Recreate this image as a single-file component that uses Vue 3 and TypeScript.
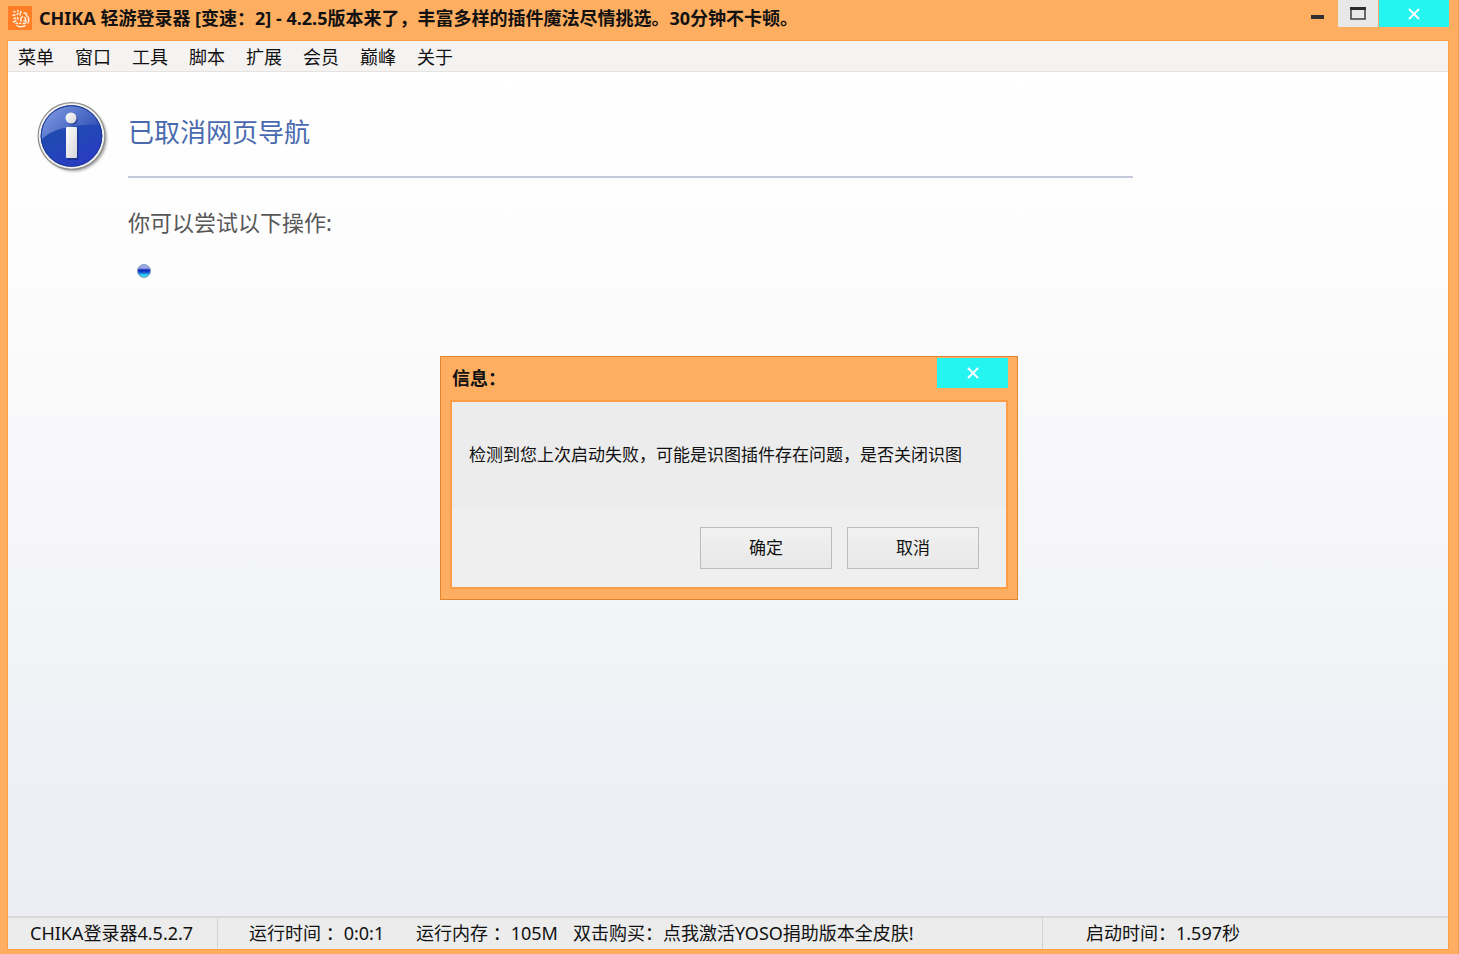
<script setup lang="ts">
const menuItems: string[] = ['菜单', '窗口', '工具', '脚本', '扩展', '会员', '巅峰', '关于']
const title = 'CHIKA 轻游登录器 [变速：2] - 4.2.5版本来了，丰富多样的插件魔法尽情挑选。30分钟不卡顿。'
</script>

<template>
  <div class="window">
    <header class="titlebar">
      <svg class="logo" viewBox="0 0 24 24" aria-hidden="true">
        <rect width="24" height="24" fill="#ff7d24" />
        <g fill="none" stroke="#ffeedd" stroke-width="1.500" stroke-linecap="round">
          <path d="M6 5.500l1 .5M10 4.500v1M5 9.500l2-.5M9 8.500l1-1M6 12.500l1.500-.5M9.500 11.500l.5 1.500M5.500 16l2.500-1.500M8 17.500l1.500-.5" />
          <path d="M13 5.500l-1 3.500M16 7c2 0 3 1 2.500 3M20 10.500c1 2 1 4.500 0 6.500M14.500 10.500c-1.500 1-2 3-1.500 4.500M16.500 11.500c1.500.5 1.500 3-.5 3.500M18 14.500c.5 2-1 3.500-3 3" />
          <path d="M9 19.500c2 1.500 5.500 1.500 8 .3M11.500 17.500h1" />
        </g>
      </svg>
      <h1 class="title">{{ title }}</h1>
      <div class="controls">
        <button class="ctl min" type="button" aria-label="最小化">
          <svg width="13" height="4" viewBox="0 0 13 4"><rect width="13" height="4" fill="#303030" /></svg>
        </button>
        <button class="ctl max" type="button" aria-label="最大化">
          <svg width="16" height="13" viewBox="0 0 16 13">
            <path d="M1 1v11h14V1" fill="none" stroke="#3c3c3c" stroke-width="1.500" />
            <rect width="16" height="3" fill="#2b2b2b" />
          </svg>
        </button>
        <button class="ctl close" type="button" aria-label="关闭">
          <svg width="12" height="12" viewBox="0 0 12 12"><path d="M1 1l10 10M11 1L1 11" stroke="#fff" stroke-width="2" /></svg>
        </button>
      </div>
    </header>

    <div class="client">
      <nav class="menubar">
        <button v-for="item in menuItems" :key="item" class="menu-item" type="button">{{ item }}</button>
      </nav>

      <main class="page">
        <svg class="info" viewBox="0 0 74 76" aria-hidden="true">
          <defs>
            <linearGradient id="disc" x1="0.1" y1="0" x2="0.6" y2="1">
              <stop offset="0" stop-color="#1f4fa8" />
              <stop offset="0.55" stop-color="#2148b4" />
              <stop offset="1" stop-color="#2a3cc4" />
            </linearGradient>
            <linearGradient id="gloss" x1="0" y1="0" x2="1" y2="0.6">
              <stop offset="0" stop-color="#86a0e4" />
              <stop offset="1" stop-color="#3050b6" />
            </linearGradient>
            <linearGradient id="stem" x1="0" y1="0" x2="1" y2="1">
              <stop offset="0" stop-color="#ffffff" />
              <stop offset="1" stop-color="#d4d4d8" />
            </linearGradient>
            <filter id="soft" x="-20%" y="-20%" width="140%" height="140%"><feGaussianBlur stdDeviation="1.600" /></filter>
          </defs>
          <circle cx="37.500" cy="38" r="33" fill="#6a6a6a" opacity="0.7" filter="url(#soft)" />
          <circle cx="35.500" cy="36" r="34" fill="#8c8c8c" />
          <circle cx="35.500" cy="36" r="32.800" fill="#f1f1ee" />
          <circle cx="35.500" cy="36" r="30.800" fill="url(#disc)" />
          <path d="M5 41C6 38 12 33 24 29C38 25 52 24 64 25A30.800 30.800 0 0 0 5 41Z" fill="url(#gloss)" />
          <circle cx="35.500" cy="36" r="30.300" fill="none" stroke="#1c3795" />
          <circle cx="36.200" cy="19.500" r="5.500" fill="#16287c" opacity="0.6" />
          <rect x="31.500" y="28" width="11" height="32" rx="1" fill="#16287c" opacity="0.6" />
          <circle cx="35" cy="18" r="5.500" fill="url(#stem)" />
          <rect x="30" y="27" width="11" height="31" rx="1" fill="url(#stem)" />
        </svg>
        <section class="message">
          <h2 class="heading">已取消网页导航</h2>
          <p class="hint">你可以尝试以下操作:</p>
          <svg class="bullet" viewBox="0 0 14 14" aria-hidden="true">
            <defs>
              <linearGradient id="ball" x1="0" y1="0" x2="0" y2="1">
                <stop offset="0" stop-color="#b4bce8" />
                <stop offset="0.3" stop-color="#8d98e0" />
                <stop offset="0.42" stop-color="#0a22b8" />
                <stop offset="0.6" stop-color="#1150d0" />
                <stop offset="0.82" stop-color="#38d4f0" />
              </linearGradient>
            </defs>
            <circle cx="7" cy="7" r="6.500" fill="url(#ball)" stroke="#7f9cba" />
          </svg>
        </section>
      </main>

      <footer class="status">
        <span class="cell version">CHIKA登录器4.5.2.7</span>
        <span class="cell runtime">
          <span class="time">运行时间 ：0:0:1</span>
          <span class="memory">运行内存 ：105M</span>
          <span>双击购买：点我激活YOSO捐助版本全皮肤!</span>
        </span>
        <span class="cell startup">启动时间：1.597秒</span>
      </footer>
    </div>

    <div class="dialog" role="dialog" aria-labelledby="dialog-title">
      <div class="dialog-bar">
        <h2 id="dialog-title" class="dialog-title">信息：</h2>
        <button class="ctl close dialog-close" type="button" aria-label="关闭">
          <svg width="12" height="12" viewBox="0 0 12 12"><path d="M1 1l10 10M11 1L1 11" stroke="#fff" stroke-width="2" /></svg>
        </button>
      </div>
      <div class="dialog-body">
        <p class="dialog-text">检测到您上次启动失败，可能是识图插件存在问题，是否关闭识图</p>
        <div class="dialog-actions">
          <button class="btn" type="button">确定</button>
          <button class="btn" type="button">取消</button>
        </div>
      </div>
    </div>
  </div>
</template>

<style>
body {
  margin: 0;
}
</style>

<style scoped>
.window {
  position: relative;
  box-sizing: border-box;
  display: flex;
  flex-direction: column;
  height: 100vh;
  padding: 0 9px 4px 7px;
  border-right: 1px solid #f39a48;
  background: #fdae61;
  color: #111;
  font-family: "Noto Sans", "Noto Sans CJK SC", sans-serif;
  font-size: 18px;
  line-height: 24px;
}

button {
  margin: 0;
  padding: 0;
  border: 0;
  background: none;
  color: inherit;
  font: inherit;
}

h1,
h2,
p {
  margin: 0;
}

.titlebar {
  display: flex;
  height: 40px;
  flex: none;
}

.logo {
  flex: none;
  width: 24px;
  height: 24px;
  margin: 6px 7px 0 1px;
}

.title {
  flex: 1;
  min-width: 0;
  overflow: hidden;
  padding-top: 6px;
  font-size: 18px;
  line-height: 24px;
  font-weight: 700;
  white-space: nowrap;
}

.controls {
  display: flex;
  align-items: flex-start;
}

.ctl {
  display: flex;
  align-items: center;
  justify-content: center;
  height: 27px;
}

.min {
  width: 42px;
  padding-top: 7px;
}

.max {
  box-sizing: border-box;
  width: 41px;
  background: #e8e8e8;
  border-right: 1px solid #fdae61;
}

.close {
  width: 70px;
  background: #24f5f1;
}

.client {
  flex: 1;
  min-height: 0;
  display: flex;
  flex-direction: column;
  border: 1px solid #fd9d45;
}

.menubar {
  display: flex;
  gap: 21px;
  flex: none;
  padding: 4px 10px 2px;
  background: #f4f3f1;
  border-bottom: 1px solid #e4e3e1;
}

.page {
  flex: 1;
  min-height: 0;
  display: flex;
  align-items: flex-start;
  padding: 28px 16px 0 28px;
  background: linear-gradient(#fff 0%, #fdfdfd 20%, #fafafb 35%, #f3f4f8 65%, #eeeff4 88%, #edeef3 100%);
}

.info {
  flex: none;
  width: 74px;
  height: 76px;
}

.message {
  width: 72%;
  margin-left: 18px;
}

.heading {
  padding: 14px 0 26px;
  border-bottom: 2px solid #c4c9da;
  color: #4a6aae;
  font-size: 26px;
  line-height: 36px;
  font-weight: 400;
}

.hint {
  padding-top: 28px;
  color: #575757;
  font-size: 22px;
  line-height: 32px;
}

.bullet {
  display: block;
  width: 14px;
  height: 14px;
  margin: 26px 0 0 9px;
}

.status {
  display: flex;
  flex: none;
  height: 31px;
  border-top: 2px solid #d9d9db;
  background: #ececec;
  line-height: 30px;
  white-space: nowrap;
}

.cell {
  box-sizing: border-box;
}

.version {
  width: 210px;
  padding-left: 22px;
  border-right: 1px solid #d3d3d3;
}

.runtime {
  display: flex;
  flex: 1;
  padding-left: 31px;
}

.time {
  width: 167px;
}

.memory {
  width: 157px;
}

.startup {
  width: 406px;
  padding-left: 43px;
  border-left: 1px solid #d3d3d3;
}

.dialog {
  position: absolute;
  top: 50%;
  left: 50%;
  box-sizing: border-box;
  width: 578px;
  transform: translate(-50%, -50%);
  margin-top: 1px;
  padding: 0 9px 10px;
  border: 1px solid #e08630;
  background: #fdae61;
}

.dialog-bar {
  display: flex;
  justify-content: space-between;
  align-items: flex-start;
  height: 43px;
}

.dialog-title {
  padding: 9px 0 0 2px;
  font-size: 18px;
  line-height: 24px;
  font-weight: 700;
}

.dialog-close {
  width: 71px;
  height: 30px;
  margin-top: 1px;
}

.dialog-body {
  border: 2px solid #fd9d45;
  background: #efefef;
}

.dialog-text {
  padding: 41px 17px 42px;
  background: #ececec;
  font-size: 17px;
  line-height: 24px;
  white-space: nowrap;
}

.dialog-actions {
  display: flex;
  justify-content: flex-end;
  gap: 15px;
  padding: 18px 27px;
}

.btn {
  box-sizing: border-box;
  width: 132px;
  height: 42px;
  border: 1px solid #bcbcbc;
  background: linear-gradient(#f1f1f1, #e8e8e8);
  font-size: 17px;
}
</style>
